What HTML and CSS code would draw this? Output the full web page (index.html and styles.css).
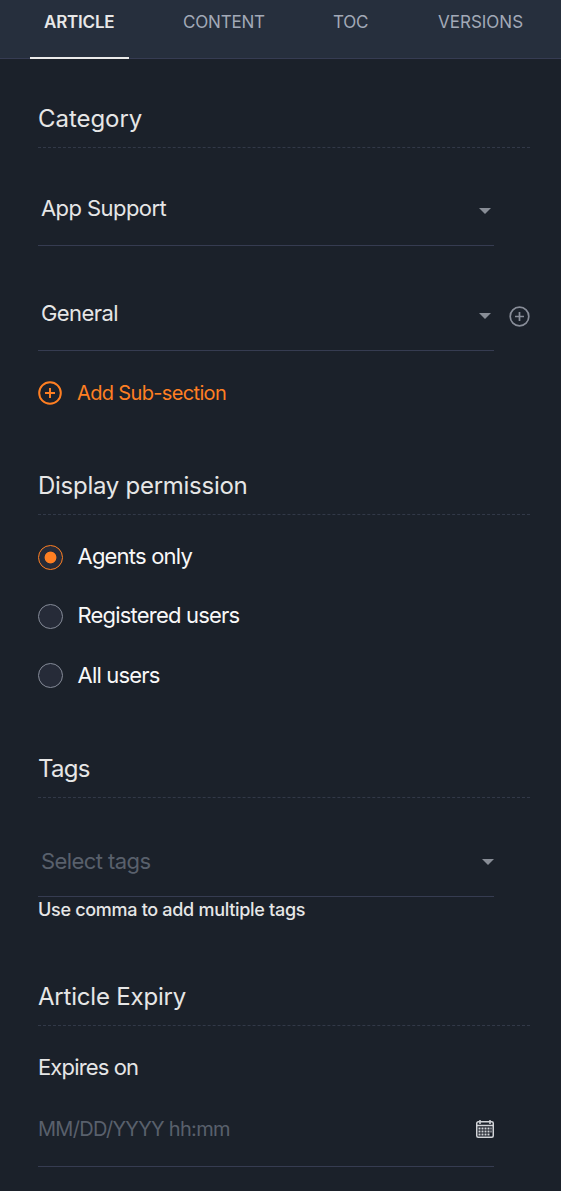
FILE: index.html
```html
<!DOCTYPE html>
<html lang="en">
<head>
<meta charset="utf-8">
<title>Article settings</title>
<link rel="stylesheet" href="styles.css">
</head>
<body>
<nav class="tabs">
  <a class="tab tab-active">ARTICLE</a>
  <a class="tab tab-content">CONTENT</a>
  <a class="tab tab-toc">TOC</a>
  <a class="tab tab-versions">VERSIONS</a>
</nav>
<main class="panel">
  <section class="section">
    <h2 class="heading">Category</h2>
    <div class="field"><span class="value app">App Support</span><i class="caret"></i></div>
    <div class="field-row">
      <div class="field"><span class="value general">General</span><i class="caret"></i></div>
      <svg class="plus" width="21" height="21" viewBox="0 0 21 21"><circle cx="10.5" cy="10.5" r="9.3"/><path d="M10.5 6v9M6 10.5h9"/></svg>
    </div>
    <div class="add">
      <svg class="add-icon" width="24" height="24" viewBox="0 0 24 24"><circle cx="12" cy="12" r="10.8"/><path d="M12 7v10M7 12h10"/></svg>
      <span class="add-label">Add Sub-section</span>
    </div>
  </section>
  <section class="section display">
    <h2 class="heading permission">Display permission</h2>
    <div class="radios">
      <label class="option"><i class="radio radio-on"></i><span class="agents">Agents only</span></label>
      <label class="option"><i class="radio"></i><span class="registered">Registered users</span></label>
      <label class="option"><i class="radio"></i><span class="all">All users</span></label>
    </div>
  </section>
  <section class="section tags">
    <h2 class="heading tags-title">Tags</h2>
    <div class="field tags-field"><span class="value placeholder">Select tags</span><i class="caret"></i></div>
    <p class="hint">Use comma to add multiple tags</p>
  </section>
  <section class="section expiry">
    <h2 class="heading expiry-title">Article Expiry</h2>
    <p class="label">Expires on</p>
    <div class="field date-field">
      <span class="date">MM/DD/YYYY hh:mm</span>
      <svg class="calendar" width="18" height="18" viewBox="0 0 18 18"><rect class="frame" x=".75" y="1.75" width="16.5" height="15.5" rx="1.5"/><path class="frame" d="M1 5.5h16M4 0v4M14 0v4"/><path class="days" d="M2.5 8.5h13M2.5 11.5h13M2.5 14.5h11"/></svg>
    </div>
  </section>
</main>
</body>
</html>
```
FILE: styles.css
```css
* { box-sizing: border-box; }
body { margin: 0; background: #1b212a; color: #e6e6e6; font-family: Inter, "Liberation Sans", sans-serif; font-size: 22px; height: 1191px; overflow: hidden; }
svg { display: block; fill: none; flex: none; }
h2, p { margin: 0; font-weight: 400; }
.tabs { display: flex; height: 59px; background: #262f3d; border-bottom: 1px solid #363c53; padding-left: 30px; }
.tab { height: 59px; line-height: 44px; font-size: 17px; color: #a2a9b7; white-space: nowrap; letter-spacing: -0.2px; }
.tab-active { width: 99px; padding-left: 14px; color: #e8e8e8; font-weight: 600; border-bottom: 2px solid #ebebeb; }
.tab-content { margin-left: 54px; width: 150px; }
.tab-toc { width: 105px; }
.tab-versions { letter-spacing: 0; }
.panel { padding: 42px 31px 0 38px; }
.section { display: flex; flex-direction: column; }
.heading { height: 47px; line-height: 36px; font-size: 24px; border-bottom: 1px dashed #323948; white-space: nowrap; letter-spacing: -0.05px; }
.permission { letter-spacing: -0.27px; }
.tags-title { letter-spacing: -0.7px; }
.expiry-title { letter-spacing: -0.2px; }
.field { display: flex; align-items: flex-start; justify-content: space-between; width: 456px; height: 68px; margin-top: 30px; padding: 0 3px; border-bottom: 1px solid #363c51; }
.value { line-height: 60px; white-space: nowrap; letter-spacing: -0.57px; }
.caret { width: 12px; height: 6px; margin-top: 30px; background: #888d96; clip-path: polygon(0 0, 100% 0, 50% 100%); }
.field-row { display: flex; align-items: center; gap: 15px; margin-top: 37px; }
.field-row .field { margin-top: 0; }
.plus { margin-bottom: 2px; stroke: #888d98; stroke-width: 1.7; }
.add { display: flex; align-items: center; gap: 15px; height: 24px; margin-top: 30px; color: #ff7f22; font-size: 20px; white-space: nowrap; letter-spacing: -0.65px; }
.add-icon { stroke: #ff7f22; stroke-width: 2; }
.display { margin-top: 63px; }
.radios { display: flex; flex-direction: column; padding-top: 12.5px; height: 191px; }
.option { display: flex; align-items: center; gap: 14.5px; height: 59.4px; color: #f8f8f8; letter-spacing: -0.8px; white-space: nowrap; line-height: 26px; }
.option span { padding-bottom: 2.5px; }
.radio { width: 25px; height: 25px; border: 1px solid #858b98; border-radius: 50%; background: #262b38; }
.radio-on { border-color: #ff7f22; background: radial-gradient(circle, #ff7f22 5.5px, #262b38 6.3px); }
.tags { margin-top: 45px; }
.tags-field { margin-top: 33px; height: 66px; padding-right: 0; }
.tags-field .caret { margin-top: 28px; }
.placeholder, .date { color: #59606c; }
.hint { font-size: 18px; line-height: 26px; letter-spacing: -0.3px; white-space: nowrap; font-weight: 450; }
.expiry { margin-top: 56px; }
.label { margin-top: 24px; line-height: 34px; letter-spacing: -0.85px; }
.date-field { margin-top: 26px; height: 57px; padding: 0; align-items: flex-start; }
.date { font-size: 20px; line-height: 38px; white-space: nowrap; letter-spacing: -0.7px; }
.calendar { margin-top: 10px; stroke: #d2d4d8; }
.frame { stroke-width: 1.5; }
.days { stroke-width: 2; stroke-dasharray: 2 1; }
```
